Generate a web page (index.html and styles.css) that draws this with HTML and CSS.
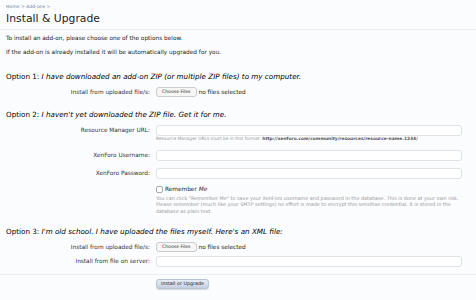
FILE: index.html
```html
<!DOCTYPE html>
<html lang="en">
<head>
  <meta charset="UTF-8">
  <title>Install &amp; Upgrade</title>
  <link rel="stylesheet" href="styles.css">
</head>
<body>
  <div class="breadcrumb"><a href="#">Home</a> &gt; <a href="#">Add-ons</a> &gt;</div>
  <h1 class="title">Install &amp; Upgrade</h1>

  <p class="intro">To install an add-on, please choose one of the options below.</p>
  <p class="intro">If the add-on is already installed it will be automatically upgraded for you.</p>

  <h2 class="option first">Option 1: <em>I have downloaded an add-on ZIP (or multiple ZIP files) to my computer.</em></h2>
  <div class="row files">
    <label class="label">Install from uploaded file/s:</label>
    <div class="field"><span class="file-btn">Choose Files</span><span class="file-text">no files selected</span></div>
  </div>

  <h2 class="option">Option 2: <em>I haven't yet downloaded the ZIP file. Get it for me.</em></h2>
  <div class="row">
    <label class="label">Resource Manager URL:</label>
    <div class="field">
      <input class="text" type="text">
      <p class="hint">Resource Manager URLs must be in this format: <b>http://xenforo.com/community/resources/resource-name.1234/</b></p>
    </div>
  </div>
  <div class="row">
    <label class="label">XenForo Username:</label>
    <div class="field"><input class="text" type="text"></div>
  </div>
  <div class="row">
    <label class="label">XenForo Password:</label>
    <div class="field"><input class="text" type="password"></div>
  </div>
  <div class="row">
    <span class="label"></span>
    <div class="field">
      <label class="check"><span class="box"></span><span>Remember <em>Me</em></span></label>
      <p class="hint long">You can click "Remember Me" to save your XenForo username and password in the database. This is done at your own risk. Please remember (much like your SMTP settings) no effort is made to encrypt this sensitive credential. It is stored in the database as plain text.</p>
    </div>
  </div>

  <h2 class="option">Option 3: <em>I'm old school. I have uploaded the files myself. Here's an XML file:</em></h2>
  <div class="row files">
    <label class="label">Install from uploaded file/s:</label>
    <div class="field"><span class="file-btn">Choose Files</span><span class="file-text">no files selected</span></div>
  </div>
  <div class="row">
    <label class="label">Install from file on server:</label>
    <div class="field"><input class="text" type="text"></div>
  </div>

  <div class="submit">
    <span class="label"></span>
    <div class="field"><button class="button">Install or Upgrade</button></div>
  </div>
</body>
</html>
```

FILE: styles.css
```css
body {
  margin: 0;
  padding: 0;
  background: #fbfcfe;
  color: #222;
  font-family: 'DejaVu Sans', sans-serif;
  font-size: 5.8px;
}
.breadcrumb {
  padding: 4px 6px 0;
  font-size: 4.6px;
  line-height: 6px;
  color: #6d7f9b;
}
.breadcrumb a {
  color: #6d7f9b;
  text-decoration: none;
}
.title {
  margin: 2px 0 0;
  padding: 0 6px 4px;
  font-size: 10.8px;
  line-height: 13px;
  font-weight: normal;
  color: #222;
  border-bottom: 1px solid #e6eff4;
}
.intro {
  margin: 5px 6px 0;
  line-height: 7px;
}
.intro + .intro {
  margin-top: 7px;
}
.option {
  margin: 13px 6px 5px;
  font-size: 7.2px;
  line-height: 10px;
  font-weight: normal;
  color: #000;
}
.option.first {
  margin-top: 16px;
}
.option em {
  font-style: italic;
}
.row, .submit {
  display: grid;
  grid-template-columns: 150px 1fr;
  column-gap: 6px;
  padding-right: 14px;
  margin-bottom: 7px;
}
.row.files {
  margin-bottom: 4px;
}
.label {
  text-align: right;
  line-height: 11px;
  color: #333;
}
.files .label {
  line-height: 10px;
}
.field {
  min-width: 0;
}
.files .field {
  display: flex;
  align-items: center;
  height: 10px;
}
.file-btn {
  display: inline-block;
  padding: 1px 5px;
  border: 1px solid #ccc;
  border-radius: 3px;
  background: #f6f6f6;
  font-size: 4.6px;
  line-height: 6px;
  color: #333;
}
.file-text {
  margin-left: 2px;
}
.text {
  display: block;
  box-sizing: border-box;
  width: 100%;
  height: 11px;
  margin: 0;
  border: 1px solid #dfe3e8;
  border-radius: 3px;
  background: #fff;
}
.hint {
  margin: 0;
  font-size: 4.4px;
  line-height: 6.5px;
  color: #9a9a9a;
}
.hint b {
  color: #555;
}
.hint.long {
  margin-top: 2px;
  font-size: 4.9px;
}
.check {
  display: flex;
  align-items: center;
  gap: 2px;
  line-height: 7px;
  color: #222;
}
.box {
  width: 5px;
  height: 5px;
  border: 1px solid #aaa;
  border-radius: 2px;
  background: #fff;
}
.submit {
  border-top: 1px solid #e8f0f4;
  padding-top: 4px;
}
.button {
  height: 10px;
  padding: 0 4px;
  border: 1px solid #b7c3d3;
  border-radius: 3px;
  background: linear-gradient(#e7edf6, #c3cfe0);
  box-shadow: 0 1px 1px rgba(0,0,0,0.15);
  font-family: 'DejaVu Sans', sans-serif;
  font-size: 4.8px;
  line-height: 8px;
  color: #222;
}
```
